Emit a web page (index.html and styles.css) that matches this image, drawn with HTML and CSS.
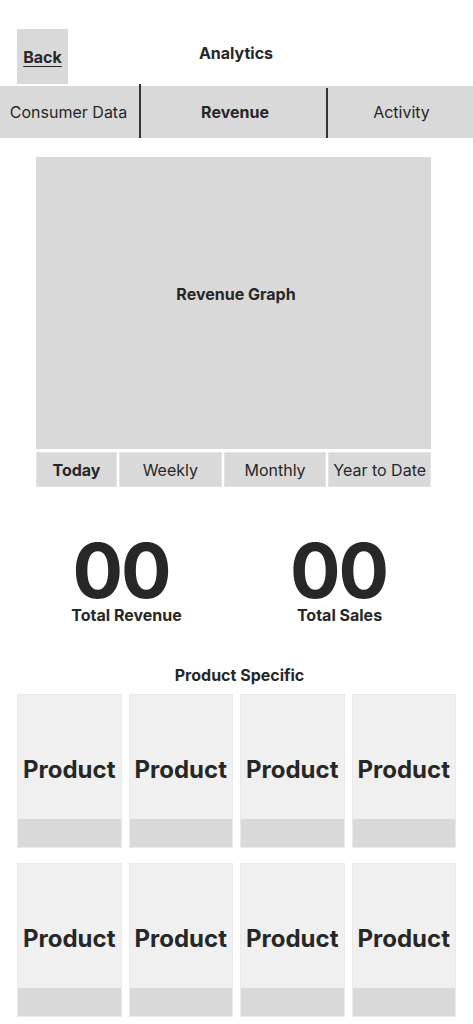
FILE: index.html
```html
<!DOCTYPE html>
<html>
<head>
<meta charset="utf-8">
<link rel="stylesheet" href="styles.css">
</head>
<body>
<div class="page">
  <header class="top">
    <a class="back">Back</a>
    <h1 class="title">Analytics</h1>
    <span></span>
  </header>
  <nav class="tabs">
    <div class="tab tab-consumer">Consumer Data</div>
    <div class="divider divider-a"></div>
    <div class="tab tab-revenue active">Revenue</div>
    <div class="divider divider-b"></div>
    <div class="tab tab-activity">Activity</div>
  </nav>
  <section class="graph-wrap">
    <div class="graph">Revenue Graph</div>
    <div class="periods">
      <div class="period period-today active">Today</div>
      <div class="period">Weekly</div>
      <div class="period">Monthly</div>
      <div class="period">Year to Date</div>
    </div>
  </section>
  <section class="stats">
    <div class="stat stat-revenue">
      <div class="stat-num">00</div>
      <div class="stat-label">Total Revenue</div>
    </div>
    <div class="stat">
      <div class="stat-num">00</div>
      <div class="stat-label">Total Sales</div>
    </div>
  </section>
  <section class="products">
    <h2 class="products-title">Product Specific</h2>
    <div class="product-grid">
      <div class="product"><div class="product-main">Product</div><div class="product-foot"></div></div>
      <div class="product"><div class="product-main">Product</div><div class="product-foot"></div></div>
      <div class="product"><div class="product-main">Product</div><div class="product-foot"></div></div>
      <div class="product"><div class="product-main">Product</div><div class="product-foot"></div></div>
      <div class="product"><div class="product-main">Product</div><div class="product-foot"></div></div>
      <div class="product"><div class="product-main">Product</div><div class="product-foot"></div></div>
      <div class="product"><div class="product-main">Product</div><div class="product-foot"></div></div>
      <div class="product"><div class="product-main">Product</div><div class="product-foot"></div></div>
    </div>
  </section>
</div>
</body>
</html>
```

FILE: styles.css
```css
* { box-sizing: border-box; }
html, body { margin: 0; padding: 0; background: #ffffff; }
body {
  font-family: Inter, "Noto Sans", sans-serif;
  color: #272727;
  width: 473px;
  overflow: hidden;
}
.page { width: 473px; }

.top {
  display: grid;
  grid-template-columns: 1fr auto 1fr;
  align-items: center;
  padding: 29px 0 0 17px;
  height: 84px;
}
.back {
  justify-self: start;
  width: 51px;
  height: 55px;
  background: #d9d9d9;
  display: flex;
  align-items: center;
  justify-content: center;
  font-size: 16px;
  font-weight: 700;
  text-decoration: underline;
  text-underline-offset: 3px;
}
.title {
  margin: 0;
  font-size: 16px;
  font-weight: 700;
  padding-bottom: 8px;
  position: relative;
  left: -9px;
}

.tabs {
  display: flex;
  height: 52px;
  margin-top: 2px;
  background: #d9d9d9;
}
.tab {
  display: flex;
  align-items: center;
  justify-content: center;
  font-size: 16px;
  padding-bottom: 1px;
}
.tab-consumer { width: 139px; padding-right: 2px; }
.tab-revenue { width: 185px; padding-left: 3px; }
.tab-activity { flex: 1; padding-left: 2px; }
.tab.active { font-weight: 700; }
.divider { width: 2px; background: #333333; }
.divider-a { margin-top: -2px; }
.divider-b { margin-top: 2px; }

.graph-wrap {
  width: 395px;
  margin: 19px 0 0 36px;
}
.graph {
  height: 292px;
  background: #d9d9d9;
  display: flex;
  align-items: center;
  justify-content: center;
  font-size: 16px;
  font-weight: 700;
  padding: 0 0 18px 5px;
}
.periods {
  display: flex;
  gap: 2px;
  margin-top: 3px;
  height: 35px;
}
.period {
  flex: 1;
  background: #d9d9d9;
  border: 1px solid #e4e4e4;
  display: flex;
  align-items: center;
  justify-content: center;
  font-size: 16px;
}
.period-today { flex: 0 0 81px; }
.period.active { font-weight: 700; }

.stats {
  display: grid;
  grid-template-columns: 1fr 1fr;
  width: 426px;
  margin: 55px 0 0 20px;
}
.stat {
  display: flex;
  flex-direction: column;
  align-items: center;
}
.stat-num {
  font-size: 75px;
  font-weight: 700;
  line-height: 58px;
  letter-spacing: -2px;
  padding-right: 2px;
}
.stat-revenue .stat-num { padding-right: 11px; }
.stat-label {
  font-size: 16px;
  font-weight: 700;
  line-height: 20px;
  margin-top: 5px;
}

.products { margin-top: 40px; }
.products-title {
  margin: 0;
  text-align: center;
  font-size: 16px;
  font-weight: 700;
  line-height: 20px;
  position: relative;
  left: 3px;
}
.product-grid {
  display: grid;
  grid-template-columns: repeat(4, 104.5px);
  column-gap: 7px;
  row-gap: 15px;
  margin: 9px 0 0 17px;
}
.product {
  height: 154px;
  display: flex;
  flex-direction: column;
  border: 1px solid #eaeaea;
}
.product-main {
  flex: 1;
  background: #f0f0f0;
  display: flex;
  align-items: center;
  justify-content: center;
  font-size: 24px;
  font-weight: 700;
  padding-top: 24px;
}
.product-foot {
  height: 28px;
  background: #d9d9d9;
}
```
